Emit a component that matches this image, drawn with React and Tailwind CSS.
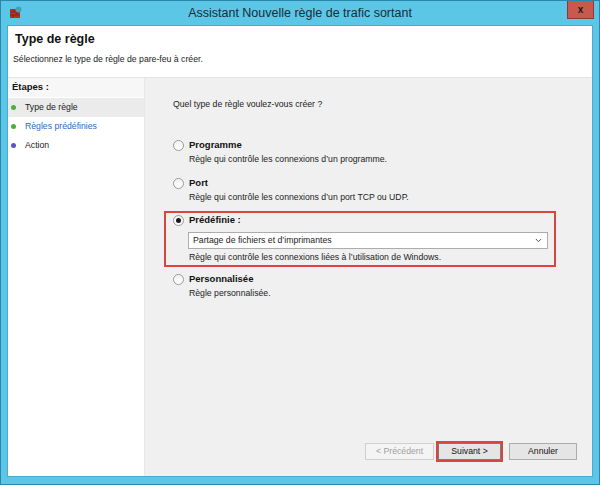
import { ChevronDown } from 'lucide-react';

const font = { fontFamily: '"Liberation Sans", Arial, "Noto Sans", sans-serif' };

const steps = [
    { label: 'Type de règle', dot: 'bg-[#4caf3c]', text: 'text-[#1a1a1a]', active: true },
    { label: 'Règles prédéfinies', dot: 'bg-[#4caf3c]', text: 'text-[#2a6bbf]' },
    { label: 'Action', dot: 'bg-[#5a55c8]', text: 'text-[#1a1a1a]' },
];

const Radio = ({ checked }) => (
    <span className="w-[11px] h-[11px] rounded-full border border-[#9a9a9a] bg-gradient-to-b from-[#f4f4f4] to-white flex items-center justify-center shrink-0">
        {checked && <span className="w-[5px] h-[5px] rounded-full bg-[#1a1a1a]" />}
    </span>
);

const Option = ({ label, desc, checked, children }) => (
    <div className="flex flex-col">
        <div className="flex items-center gap-[5px] h-[12px]">
            <Radio checked={checked} />
            <span className="text-[9.5px] font-bold text-[#111] leading-[12px]">{label}</span>
        </div>
        {children}
        <div className="pl-[16px] text-[8.7px] text-[#222] leading-[12px] mt-[2px]">{desc}</div>
    </div>
);

const FirewallIcon = () => (
    <svg width="12" height="12" viewBox="0 0 12 12">
        <rect x="0" y="3" width="10" height="9" fill="#b3332a" />
        <path d="M0 6h10M0 9h10M4 3v3M7 6v3M3 9v3" stroke="#7a1d16" strokeWidth="0.7" />
        <circle cx="8.5" cy="3.5" r="3" fill="#3f9fd8" />
        <path d="M7 2.5c1 0 1 1 2 1s1 1 1.5 1" stroke="#4caf3c" strokeWidth="1.2" fill="none" />
    </svg>
);

export default function App() {
    return (
        <div style={font} className="w-[600px] h-[485px] bg-[#5cc6e7] border border-[#2b86ae] flex flex-col overflow-hidden">
            {/* Title bar */}
            <div className="h-[24px] shrink-0 relative flex items-center justify-center">
                <div className="absolute left-[9px] top-[5px]">
                    <FirewallIcon />
                </div>
                <span className="text-[12.5px] text-[#1b2b35] leading-none">Assistant Nouvelle règle de trafic sortant</span>
                <div className="absolute right-[5px] top-[-1px] w-[27px] h-[19px] bg-[#c75a4f] border border-[#8e3a33] flex items-center justify-center">
                    <span className="text-[10px] font-bold text-[#1a1a1a] leading-none">x</span>
                </div>
            </div>

            {/* Body */}
            <div className="flex-1 mx-[6px] mb-[7px] bg-white flex flex-col border border-[#4aa9cc]">
                <div className="h-[52px] shrink-0 border-b border-[#e4e4e4] px-[7px] pt-[5px]">
                    <div className="text-[12.5px] font-bold text-[#111] leading-[16px]">Type de règle</div>
                    <div className="text-[8.7px] text-[#222] leading-[12px] mt-[6px] -ml-[2px]">
                        Sélectionnez le type de règle de pare-feu à créer.
                    </div>
                </div>

                <div className="flex-1 flex">
                    {/* Steps */}
                    <div className="w-[137px] shrink-0 bg-white border-r border-[#e8e8e8]">
                        <div className="h-[19px] bg-[#f7f7f7] px-[4px] flex items-center">
                            <span className="text-[9.5px] font-bold text-[#111]">Étapes :</span>
                        </div>
                        <div className="mt-[1px] flex flex-col">
                            {steps.map(({ label, dot, text, active }) => (
                                <div
                                    key={label}
                                    className={`h-[19px] flex items-center gap-[9px] pl-[3px] ${active ? 'bg-[#ebebeb]' : ''}`}
                                >
                                    <span className={`w-[5px] h-[5px] rounded-full ${dot}`} />
                                    <span className={`text-[8.7px] ${text}`}>{label}</span>
                                </div>
                            ))}
                        </div>
                    </div>

                    {/* Main */}
                    <div className="flex-1 bg-[#f0f0f0] flex flex-col pl-[28px] pt-[20px] pb-[14px] pr-[15px]">
                        <div className="text-[8.7px] text-[#222] leading-[12px]">Quel type de règle voulez-vous créer ?</div>

                        <div className="mt-[29px] flex flex-col gap-[12px]">
                            <Option label="Programme" desc="Règle qui contrôle les connexions d’un programme." />
                            <Option label="Port" desc="Règle qui contrôle les connexions d’un port TCP ou UDP." />
                        </div>

                        <div className="mt-[8px] -ml-[9px] w-[392px] border-2 border-[#d9463e] pl-[7px] pr-[6px] pt-[1px] pb-[2px]">
                            <Option label="Prédéfinie :" checked desc="Règle qui contrôle les connexions liées à l’utilisation de Windows.">
                                <div className="mt-[6px] ml-[15px] h-[17px] bg-white border border-[#acacac] flex items-center justify-between px-[4px]">
                                    <span className="text-[8.7px] text-[#222]">Partage de fichiers et d’imprimantes</span>
                                    <ChevronDown className="w-[9px] h-[9px] text-[#444]" strokeWidth={2.5} />
                                </div>
                            </Option>
                        </div>

                        <div className="mt-[6px]">
                            <Option label="Personnalisée" desc="Règle personnalisée." />
                        </div>

                        <div className="mt-auto flex items-center justify-end">
                            <div className="w-[69px] h-[17px] border border-[#cfcfcf] bg-[#f4f4f4] flex items-center justify-center text-[8.7px] text-[#a0a0a0]">
                                &lt; Précédent
                            </div>
                            <div className="ml-[2px] border-2 border-[#d9463e]">
                                <div className="w-[63px] h-[17px] border border-[#7a7a7a] bg-[#e5e5e5] flex items-center justify-center text-[8.7px] text-[#111]">
                                    Suivant &gt;
                                </div>
                            </div>
                            <div className="ml-[6px] w-[68px] h-[17px] border border-[#acacac] bg-[#e5e5e5] flex items-center justify-center text-[8.7px] text-[#111]">
                                Annuler
                            </div>
                        </div>
                    </div>
                </div>
            </div>
        </div>
    );
}
